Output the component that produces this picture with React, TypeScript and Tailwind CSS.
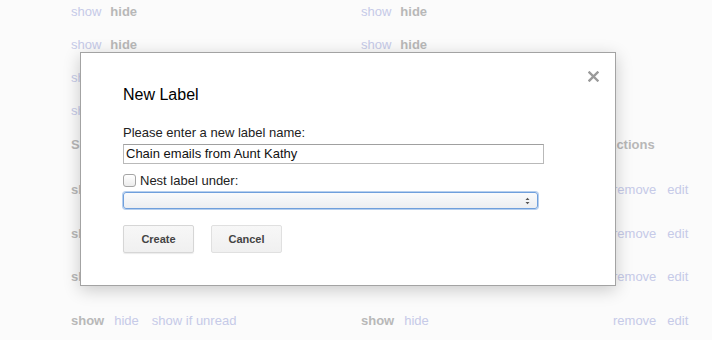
import React from "react";

const F = { fontFamily: '"Liberation Sans", Arial, sans-serif' };

function Link({ children }: { children: React.ReactNode }) {
  return <span className="text-[#c6cae8]">{children}</span>;
}
function Sel({ children }: { children: React.ReactNode }) {
  return <span className="font-bold text-[#b8b8b8]">{children}</span>;
}

function Row({ h, a, b, c }: { h: string; a: React.ReactNode; b?: React.ReactNode; c?: React.ReactNode }) {
  return (
    <div className={`grid grid-cols-[290px_252px_1fr] items-center ${h}`}>
      <div className="flex items-center">{a}</div>
      <div className="flex items-center">{b}</div>
      <div className="flex items-center">{c}</div>
    </div>
  );
}

export default function App() {
  const hideRow = (
    <span className="flex gap-[9px]">
      <Link>show</Link>
      <Sel>hide</Sel>
    </span>
  );
  const showRow = (
    <span className="flex gap-[8px]">
      <Sel>show</Sel>
      <Link>hide</Link>
    </span>
  );
  const actions = (
    <span className="flex gap-[11px]">
      <Link>remove</Link>
      <Link>edit</Link>
    </span>
  );
  return (
    <div className="relative h-[340px] w-[712px] overflow-hidden bg-[#fbfbfb] text-[13px]" style={F}>
      <div className="mt-[-5px] pl-[71px]">
        <Row h="h-[33px]" a={hideRow} b={hideRow} />
        <Row h="h-[33px]" a={hideRow} b={hideRow} />
        <Row h="h-[33px]" a={hideRow} b={hideRow} />
        <Row h="h-[33px]" a={hideRow} b={hideRow} />
        <Row
          h="h-[36px] mb-[5px]"
          a={<Sel>Show</Sel>}
          b={<span />}
          c={<span className="ml-[-6px] font-bold text-[#b8b8b8]">Actions</span>}
        />
        <Row h="h-[43.5px]" a={showRow} b={hideRow} c={actions} />
        <Row h="h-[43.5px]" a={showRow} b={hideRow} c={actions} />
        <Row h="h-[43.5px]" a={showRow} b={hideRow} c={actions} />
        <Row
          h="h-[43.5px]"
          a={
            <span className="flex">
              <Sel>show</Sel>
              <span className="ml-[10px]">
                <Link>hide</Link>
              </span>
              <span className="ml-[13px]">
                <Link>show if unread</Link>
              </span>
            </span>
          }
          b={
            <span className="flex gap-[10px]">
              <Sel>show</Sel>
              <Link>hide</Link>
            </span>
          }
          c={actions}
        />
      </div>

      {/* Dialog */}
      <div className="absolute left-[80px] top-[52px] h-[234px] w-[536px] border border-[#a3a3a3] bg-white shadow-[0_4px_16px_rgba(0,0,0,0.2)]">
        <svg className="absolute left-[507px] top-[18px]" width="11" height="11" viewBox="0 0 11 11">
          <path d="M1.5 1.5 L9.5 9.5 M9.5 1.5 L1.5 9.5" stroke="#9a9a9a" strokeWidth="2.4" strokeLinecap="square" />
        </svg>
        <div className="flex flex-col pl-[42px] pt-[33px]">
          <div className="text-[16px] leading-[18px] text-black">New Label</div>
          <div className="mt-[21px] text-[13px] leading-[15px] text-[#222]">Please enter a new label name:</div>
          <div className="mt-[4px] flex h-[20px] w-[421px] items-center border border-[#b9b9b9] border-t-[#a0a0a0] pl-[2px] text-[13px] text-[#111]">
            Chain emails from Aunt Kathy
          </div>
          <div className="mt-[9px] flex items-center">
            <span className="h-[13px] w-[13px] rounded-[3px] border border-[#a5a5a5] bg-gradient-to-b from-white to-[#ececec]" />
            <span className="ml-[4px] text-[13px] leading-[15px] text-[#222]">Nest label under:</span>
          </div>
          <div className="mt-[4px] flex h-[17px] w-[415px] items-center justify-end rounded-[3px] border border-[#6f9fdc] bg-gradient-to-b from-[#fafbfc] to-[#eceef1] pr-[7px] shadow-[0_0_0_1px_rgba(122,167,224,0.55)]">
            <svg width="5" height="8" viewBox="0 0 5 8">
              <path d="M0.5 3 L2.5 0.8 L4.5 3 Z M0.5 5 L2.5 7.2 L4.5 5 Z" fill="#555" />
            </svg>
          </div>
          <div className="mt-[16px] flex gap-[17px]">
            <button className="h-[28px] w-[71px] rounded-[2px] border border-[#d6d6d6] bg-gradient-to-b from-[#f7f7f7] to-[#f0f0f0] text-[11px] font-bold text-[#444] shadow-[0_1px_1px_rgba(0,0,0,0.08)]">
              Create
            </button>
            <button className="h-[28px] w-[71px] rounded-[2px] border border-[#e0e0e0] bg-gradient-to-b from-[#f7f7f7] to-[#f0f0f0] text-[11px] font-bold text-[#444]">
              Cancel
            </button>
          </div>
        </div>
      </div>
    </div>
  );
}
